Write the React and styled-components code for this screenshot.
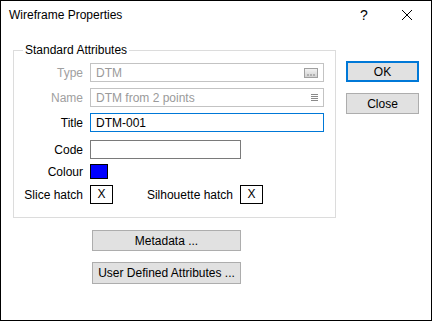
import React from 'react';
import styled, { createGlobalStyle } from 'styled-components';

const GlobalStyle = createGlobalStyle`
  html, body {
    margin: 0;
    padding: 0;
    background: #fff;
  }
  body {
    font-family: "Segoe UI", "Liberation Sans", Arial, sans-serif;
    font-size: 12px;
    color: #000;
  }
`;

const Frame = styled.div`
  width: 432px;
  height: 321px;
  box-sizing: border-box;
  border: 1px solid #000;
  background: #fff;
  display: flex;
  flex-direction: column;
`;

const TitleBar = styled.div`
  height: 30px;
  display: flex;
  align-items: center;
  padding: 0 4px 2px 8px;
  box-sizing: border-box;
`;

const Caption = styled.div`
  flex: 1;
`;

const CaptionButton = styled.div`
  width: ${(p) => p.$w || 40}px;
  height: 28px;
  display: flex;
  align-items: center;
  justify-content: center;
  font-size: 14px;
`;

const Body = styled.div`
  display: flex;
  padding: 11px 0 0 12px;
  gap: 10px;
`;

const LeftColumn = styled.div`
  display: flex;
  flex-direction: column;
`;

const GroupBox = styled.fieldset`
  margin: 0;
  width: 323px;
  box-sizing: border-box;
  border: 1px solid #dcdcdc;
  padding: 4px 0 13px 0;
  display: flex;
  flex-direction: column;
`;

const Legend = styled.legend`
  margin-left: 9px;
  padding: 0 2px;
  line-height: 16px;
`;

const Row = styled.div`
  display: flex;
  align-items: center;
  gap: 7px;
  height: ${(p) => p.$h || 19}px;
  margin-top: ${(p) => p.$mt ?? 6}px;
`;

const Label = styled.div`
  width: ${(p) => p.$w || 69}px;
  text-align: right;
  color: ${(p) => (p.$disabled ? '#a0a0a0' : '#000')};
  white-space: nowrap;
`;

const Field = styled.div`
  width: ${(p) => p.$w || 234}px;
  height: 19px;
  box-sizing: border-box;
  border: 1px solid ${(p) => p.$border || '#7a7a7a'};
  display: flex;
  align-items: center;
  padding: 0 5px 0 5px;
  color: ${(p) => (p.$disabled ? '#9a9a9a' : '#000')};
`;

const FieldText = styled.span`
  flex: 1;
`;

const Swatch = styled.div`
  width: 18px;
  height: 15px;
  box-sizing: border-box;
  border: 1px solid #000;
  background: #0000ff;
`;

const HatchBox = styled.div`
  width: 23px;
  height: 19px;
  box-sizing: border-box;
  border: 1px solid #000;
  display: flex;
  align-items: center;
  justify-content: center;
  padding-bottom: 2px;
`;

const Button = styled.div`
  width: ${(p) => p.$w || 73}px;
  height: ${(p) => p.$h || 21}px;
  box-sizing: border-box;
  background: #e1e1e1;
  border: ${(p) => (p.$default ? '2px solid #0078d7' : '1px solid #adadad')};
  display: flex;
  align-items: center;
  justify-content: center;
  white-space: nowrap;
  margin-top: ${(p) => p.$mt || 0}px;
  margin-left: ${(p) => p.$ml || 0}px;
`;

const RightColumn = styled.div`
  display: flex;
  flex-direction: column;
  padding-top: 19px;
`;

const EllipsisIcon = () => (
  <svg width="14" height="10" viewBox="0 0 14 10">
    <defs>
      <linearGradient id="eg" x1="0" y1="0" x2="0" y2="1">
        <stop offset="0" stopColor="#f4f4f4" />
        <stop offset="1" stopColor="#d0d0d0" />
      </linearGradient>
    </defs>
    <rect x="0.5" y="0.5" width="13" height="9" fill="url(#eg)" stroke="#a0a0a0" />
    <rect x="3" y="6" width="2" height="2" fill="#b0b0b0" />
    <rect x="6" y="6" width="2" height="2" fill="#b0b0b0" />
    <rect x="9" y="6" width="2" height="2" fill="#b0b0b0" />
  </svg>
);

const ListIcon = () => (
  <svg width="7" height="7" viewBox="0 0 7 7">
    <rect x="0" y="0" width="7" height="1" fill="#8a8a8a" />
    <rect x="0" y="2" width="7" height="1" fill="#8a8a8a" />
    <rect x="0" y="4" width="7" height="1" fill="#8a8a8a" />
    <rect x="0" y="6" width="7" height="1" fill="#8a8a8a" />
  </svg>
);

const CloseGlyph = () => (
  <svg width="12" height="12" viewBox="0 0 12 12">
    <path d="M1 1 L11 11 M11 1 L1 11" stroke="#000" strokeWidth="1" />
  </svg>
);

const App = () => {
  return (
    <>
      <GlobalStyle />
      <Frame>
        <TitleBar>
          <Caption>Wireframe Properties</Caption>
          <CaptionButton $w={46}>?</CaptionButton>
          <CaptionButton>
            <CloseGlyph />
          </CaptionButton>
        </TitleBar>
        <Body>
          <LeftColumn>
            <GroupBox>
              <Legend>Standard Attributes</Legend>
              <Row $mt={1}>
                <Label $disabled>Type</Label>
                <Field $disabled $border="#c3c3c3">
                  <FieldText>DTM</FieldText>
                  <EllipsisIcon />
                </Field>
              </Row>
              <Row>
                <Label $disabled>Name</Label>
                <Field $disabled $border="#c3c3c3">
                  <FieldText>DTM from 2 points</FieldText>
                  <ListIcon />
                </Field>
              </Row>
              <Row>
                <Label>Title</Label>
                <Field $border="#0078d7">
                  <FieldText>DTM-001</FieldText>
                </Field>
              </Row>
              <Row $mt={8}>
                <Label>Code</Label>
                <Field $w={151} />
              </Row>
              <Row $h={15} $mt={5}>
                <Label>Colour</Label>
                <Swatch />
              </Row>
              <Row $mt={6}>
                <Label>Slice hatch</Label>
                <HatchBox>X</HatchBox>
                <Label $w={113}>Silhouette hatch</Label>
                <HatchBox>X</HatchBox>
              </Row>
            </GroupBox>
            <Button $w={149} $h={21} $mt={12} $ml={79}>Metadata ...</Button>
            <Button $w={149} $h={22} $mt={11} $ml={79}>User Defined Attributes ...</Button>
          </LeftColumn>
          <RightColumn>
            <Button $default>OK</Button>
            <Button $mt={11}>Close</Button>
          </RightColumn>
        </Body>
      </Frame>
    </>
  );
};

export default App;
